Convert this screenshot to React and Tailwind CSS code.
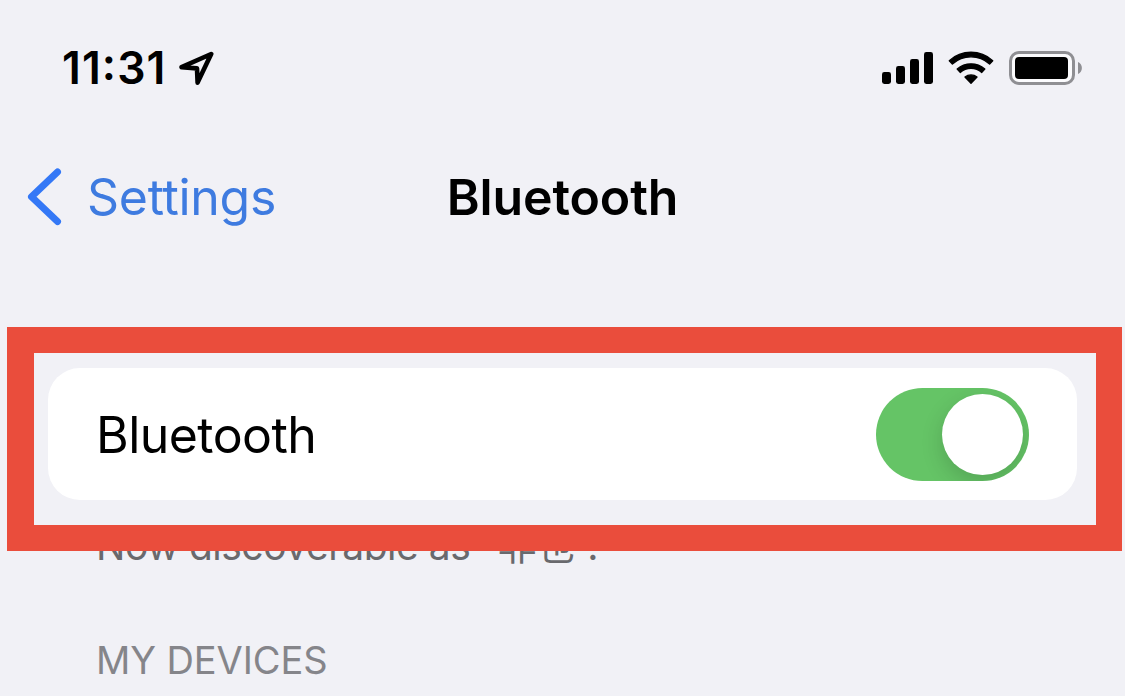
function StatusBar() {
  return (
    <header className="flex h-[136px] items-center justify-between pr-[43px] pl-[62px]">
      <div className="flex items-center">
        <span className="flex text-[44.5px] leading-none font-semibold tracking-[1.1px]">
          <span>11</span>
          <span className="-translate-y-[4px]">:</span>
          <span>31</span>
        </span>
        <svg className="ml-[13px] h-[36px] w-[36px]" viewBox="0 0 36 36" fill="none" stroke="#000" strokeWidth="4.6" strokeLinejoin="round">
          <path d="M32.2 4 L2.6 17.2 L18 18.4 L18.6 32.6 Z" />
        </svg>
      </div>
      <div className="flex items-center">
        <svg className="h-[34px] w-[52px]" viewBox="0 0 52 34">
          <rect x="0" y="21" width="9" height="12" rx="2.4" />
          <rect x="14" y="15" width="9" height="18" rx="2.4" />
          <rect x="28" y="8" width="9" height="25" rx="2.4" />
          <rect x="42" y="1" width="9" height="32" rx="2.4" />
        </svg>
        <svg className="ml-[14px] h-[34px] w-[46px]" viewBox="0 0 46 34" stroke="#000" strokeWidth="1.4" strokeLinejoin="round">
          <path d="M1.3 9.7 A32.3 32.3 0 0 1 44.7 9.7 L41.6 13 A27.7 27.7 0 0 0 4.4 13 Z" />
          <path d="M9.2 18.1 A20.8 20.8 0 0 1 36.8 18.1 L33.8 21.4 A16.2 16.2 0 0 0 12.2 21.4 Z" />
          <path d="M17 26.1 A9.3 9.3 0 0 1 29 26.1 L23 32.3 Z" />
        </svg>
        <svg className="ml-[14px] h-[36px] w-[74px]" viewBox="0 0 74 36">
          <rect x="2.5" y="2.5" width="63" height="31" rx="8.5" fill="#fbfbfd" stroke="#8f8f93" strokeWidth="3" />
          <rect x="7" y="7" width="53" height="22" rx="4" />
          <path d="M70 12 C75.2 14 75.2 22 70 24 Z" fill="#8f8f93" />
        </svg>
      </div>
    </header>
  );
}

function NavBar() {
  return (
    <nav className="grid h-[122px] grid-cols-[1fr_auto_1fr] items-center px-[26px]">
      <div className="flex items-center text-[#3478f6]">
        <svg className="h-[58px] w-[36px]" viewBox="0 0 36 58" fill="none" stroke="currentColor" strokeWidth="7" strokeLinecap="round" strokeLinejoin="round">
          <path d="M31.5 4 L5.5 28.8 L31.5 53.5" />
        </svg>
        <span className="ml-[25px] text-[50px] leading-none tracking-[-0.3px] text-[#3e7be0]">Settings</span>
      </div>
      <h1 className="text-[50px] leading-none font-semibold tracking-[-0.1px]">Bluetooth</h1>
    </nav>
  );
}

function Toggle() {
  return (
    <button role="switch" aria-checked="true" className="flex h-[93px] w-[153px] items-center justify-end overflow-hidden rounded-full bg-[#65c466] p-[6px]">
      <span className="h-[81px] w-[81px] rounded-full bg-white shadow-[0_8px_22px_rgba(0,0,0,0.16)]" />
    </button>
  );
}

export default function App() {
  return (
    <main className="flex h-[696px] w-[1125px] flex-col overflow-hidden bg-[#f1f1f6] font-['Inter','Noto_Sans_CJK_SC',sans-serif] whitespace-nowrap text-black">
      <StatusBar />
      <NavBar />
      <section className="relative z-10 mt-[69px] mr-[3px] ml-[7px] h-[224px] border-[26px] border-l-[27px] border-[#ea4d3c] pt-[15px] pr-[19px] pl-[14px]">
        <div className="flex h-[132px] items-center justify-between rounded-[32px] bg-white pr-[48px] pl-[48px]">
          <span className="pt-[2px] text-[50px] leading-none tracking-[-0.55px]">Bluetooth</span>
          <Toggle />
        </div>
      </section>
      <p className="-mt-[25px] pl-[96px] text-[39px] leading-[40px] tracking-[-0.5px] text-[#69696d]">Now discoverable as “非也”.</p>
      <h2 className="mt-[74px] pl-[96px] text-[38px] leading-[40px] tracking-[-0.1px] text-[#85858a]">MY DEVICES</h2>
    </main>
  );
}
